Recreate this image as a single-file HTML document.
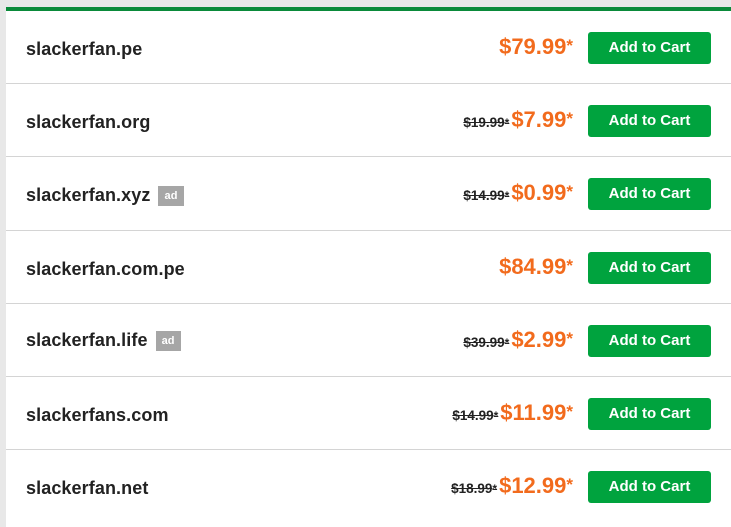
<!DOCTYPE html>
<html><head><style>
body{margin:0;width:731px;height:523px;overflow:hidden;background:#e8e8e8;font-family:"Liberation Sans",sans-serif;}
.wrap{position:absolute;left:6px;top:7px;width:725px;height:516px;background:#fff;border-top:4px solid #0a8a3a;}
.row{position:relative;height:72.2px;border-bottom:1px solid #d4d4d4;}
.name{position:absolute;left:20px;top:28px;font-size:18px;font-weight:bold;color:#222;letter-spacing:0.1px;}
.ad{display:inline-block;background:#a6a6a6;color:#fff;font-size:11px;padding:4px 6px;margin-left:8px;vertical-align:2px;}
.price{position:absolute;right:158px;top:23px;font-size:22px;font-weight:bold;color:#f26b1d;white-space:nowrap;}
.price sup{font-size:17px;vertical-align:3px;}
.old{font-size:13.5px;color:#222;text-decoration:line-through;font-weight:bold;margin-right:2px;}
.old i{font-style:normal;font-size:12px;}
.btn{position:absolute;left:582px;top:21px;width:123px;height:32px;background:#00a33e;border-radius:3px;color:#fff;font-weight:bold;font-size:15px;text-align:center;line-height:31px;}
</style></head><body>
<div class="wrap">
<div class="row"><div class="name">slackerfan.pe</div><div class="price">$79.99<sup>*</sup></div><div class="btn">Add to Cart</div></div>
<div class="row"><div class="name">slackerfan.org</div><div class="price"><span class="old">$19.99<i>*</i></span>$7.99<sup>*</sup></div><div class="btn">Add to Cart</div></div>
<div class="row"><div class="name">slackerfan.xyz<span class="ad">ad</span></div><div class="price"><span class="old">$14.99<i>*</i></span>$0.99<sup>*</sup></div><div class="btn">Add to Cart</div></div>
<div class="row"><div class="name">slackerfan.com.pe</div><div class="price">$84.99<sup>*</sup></div><div class="btn">Add to Cart</div></div>
<div class="row"><div class="name" style="top:26px">slackerfan.life<span class="ad">ad</span></div><div class="price"><span class="old">$39.99<i>*</i></span>$2.99<sup>*</sup></div><div class="btn">Add to Cart</div></div>
<div class="row"><div class="name">slackerfans.com</div><div class="price"><span class="old">$14.99<i>*</i></span>$11.99<sup>*</sup></div><div class="btn">Add to Cart</div></div>
<div class="row" style="border-bottom:none"><div class="name">slackerfan.net</div><div class="price"><span class="old">$18.99<i>*</i></span>$12.99<sup>*</sup></div><div class="btn">Add to Cart</div></div>
</div>
</body></html>
